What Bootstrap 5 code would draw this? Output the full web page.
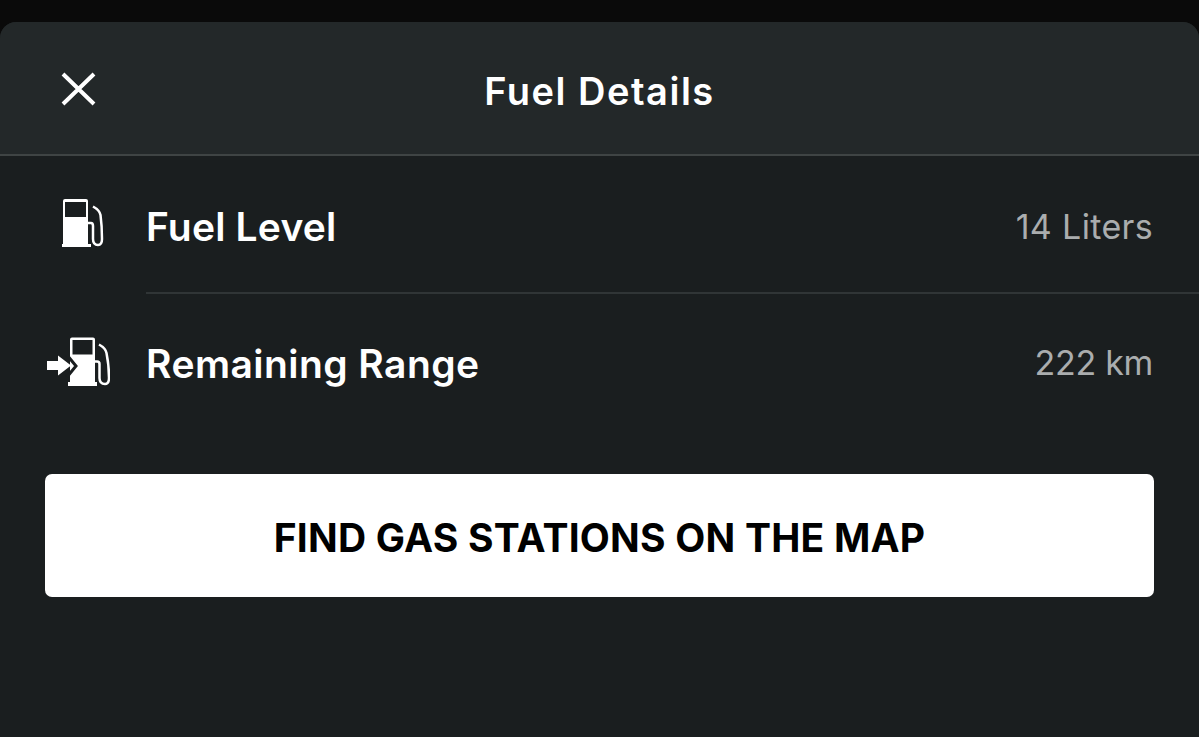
<!DOCTYPE html>
<html lang="en">
<head>
<meta charset="utf-8">
<title>Fuel Details</title>
<link href="https://cdn.jsdelivr.net/npm/bootstrap@5.3.0/dist/css/bootstrap.min.css" rel="stylesheet">
<style>
html,body{height:100%;}
body{background:#0a0a0a;overflow:hidden;font-family:Inter,"Noto Sans",sans-serif;padding-top:22px;}
.sheet{background:#1a1e1f;border-radius:16px 16px 0 0;height:715px;overflow:hidden;}
.sheet-head{height:134px;background:#232829;border-bottom:2px solid #3f4444;position:relative;}
.sheet-title{font-size:38px;font-weight:600;color:#fff;letter-spacing:1.5px;line-height:1;padding-top:6px;}
.close-x{position:absolute;left:61px;top:50px;}
.fuel-row{padding-left:45px;padding-right:46px;}
.row-first{height:136px;}
.row-second{height:138px;}
.row-first .row-name,.row-first .row-value{padding-top:5px;}
.fuel-icon{width:65px;height:56px;margin-right:36px;flex:none;}
.row-name{font-size:39px;font-weight:600;color:#fff;line-height:1;letter-spacing:.45px;}
.row-first .row-name{letter-spacing:.2px;}
.row-value{font-size:34px;font-weight:400;color:#aaadae;line-height:1;letter-spacing:-.3px;}
.row-first .row-value{letter-spacing:.35px;}
.row-rule{height:2px;background:#303536;margin-left:146px;}
.find-btn{display:block;width:1109px;height:123px;margin:42px 0 0 45px;padding-top:9px;background:#fff;color:#000;border:0;border-radius:7px;font-size:39px;font-weight:700;line-height:1;letter-spacing:.22px;}
.find-btn:hover,.find-btn:active{background:#fff!important;color:#000!important;}
</style>
</head>
<body>
<div class="sheet">
  <div class="sheet-head d-flex align-items-center justify-content-center">
    <svg class="close-x" width="35" height="34" viewBox="0 0 35 34" aria-hidden="true"><path d="M2 2 L33 32 M33 2 L2 32" stroke="#fff" stroke-width="4" fill="none"/></svg>
    <div class="sheet-title">Fuel Details</div>
  </div>
  <div class="fuel-row row-first d-flex align-items-center">
    <svg class="fuel-icon" viewBox="0 0 65 56" aria-hidden="true">
      <path fill="#fff" fill-rule="evenodd" d="M20 3 H41 Q43 3 43 5 V48 H46 V51 H17 V48 H18 V5 Q18 3 20 3 Z M20 6 V21 H41 V6 Z"/>
      <path fill="none" stroke="#fff" stroke-width="2.5" d="M43 27 H46 Q48 27 48 30 V43 Q48 49 53 49 Q57 49 57 43 Q57 30 55.5 19 Q54.5 14 48 10.5"/>
    </svg>
    <div class="row-name flex-grow-1">Fuel Level</div>
    <div class="row-value">14 Liters</div>
  </div>
  <div class="row-rule"></div>
  <div class="fuel-row row-second d-flex align-items-center">
    <svg class="fuel-icon" viewBox="0 0 65 56" aria-hidden="true">
      <path fill="#fff" fill-rule="evenodd" d="M27 2.5 H48 Q50 2.5 50 4.5 V47 H52 V51 H23 V47 H25 V4.5 Q25 2.5 27 2.5 Z M27.5 5 V19.5 H47.5 V5 Z"/>
      <path fill="none" stroke="#1a1e1f" stroke-width="3" d="M22 20 L31 31 L22 42"/>
      <path fill="#fff" d="M2 26 H13 V20.5 L26 30.5 L13 40.5 V35 H2 Z"/>
      <path fill="none" stroke="#fff" stroke-width="2.5" d="M50 26.5 H52 Q54.5 26.5 54.5 29 V43 Q54.5 49 60 49 Q64 49 64 43 Q64 30 61.5 18 Q60.5 13 54 9.5"/>
    </svg>
    <div class="row-name flex-grow-1">Remaining Range</div>
    <div class="row-value">222 km</div>
  </div>
  <button type="button" class="btn find-btn">FIND GAS STATIONS ON THE MAP</button>
</div>
<script src="https://cdn.jsdelivr.net/npm/bootstrap@5.3.0/dist/js/bootstrap.bundle.min.js"></script>
</body>
</html>
